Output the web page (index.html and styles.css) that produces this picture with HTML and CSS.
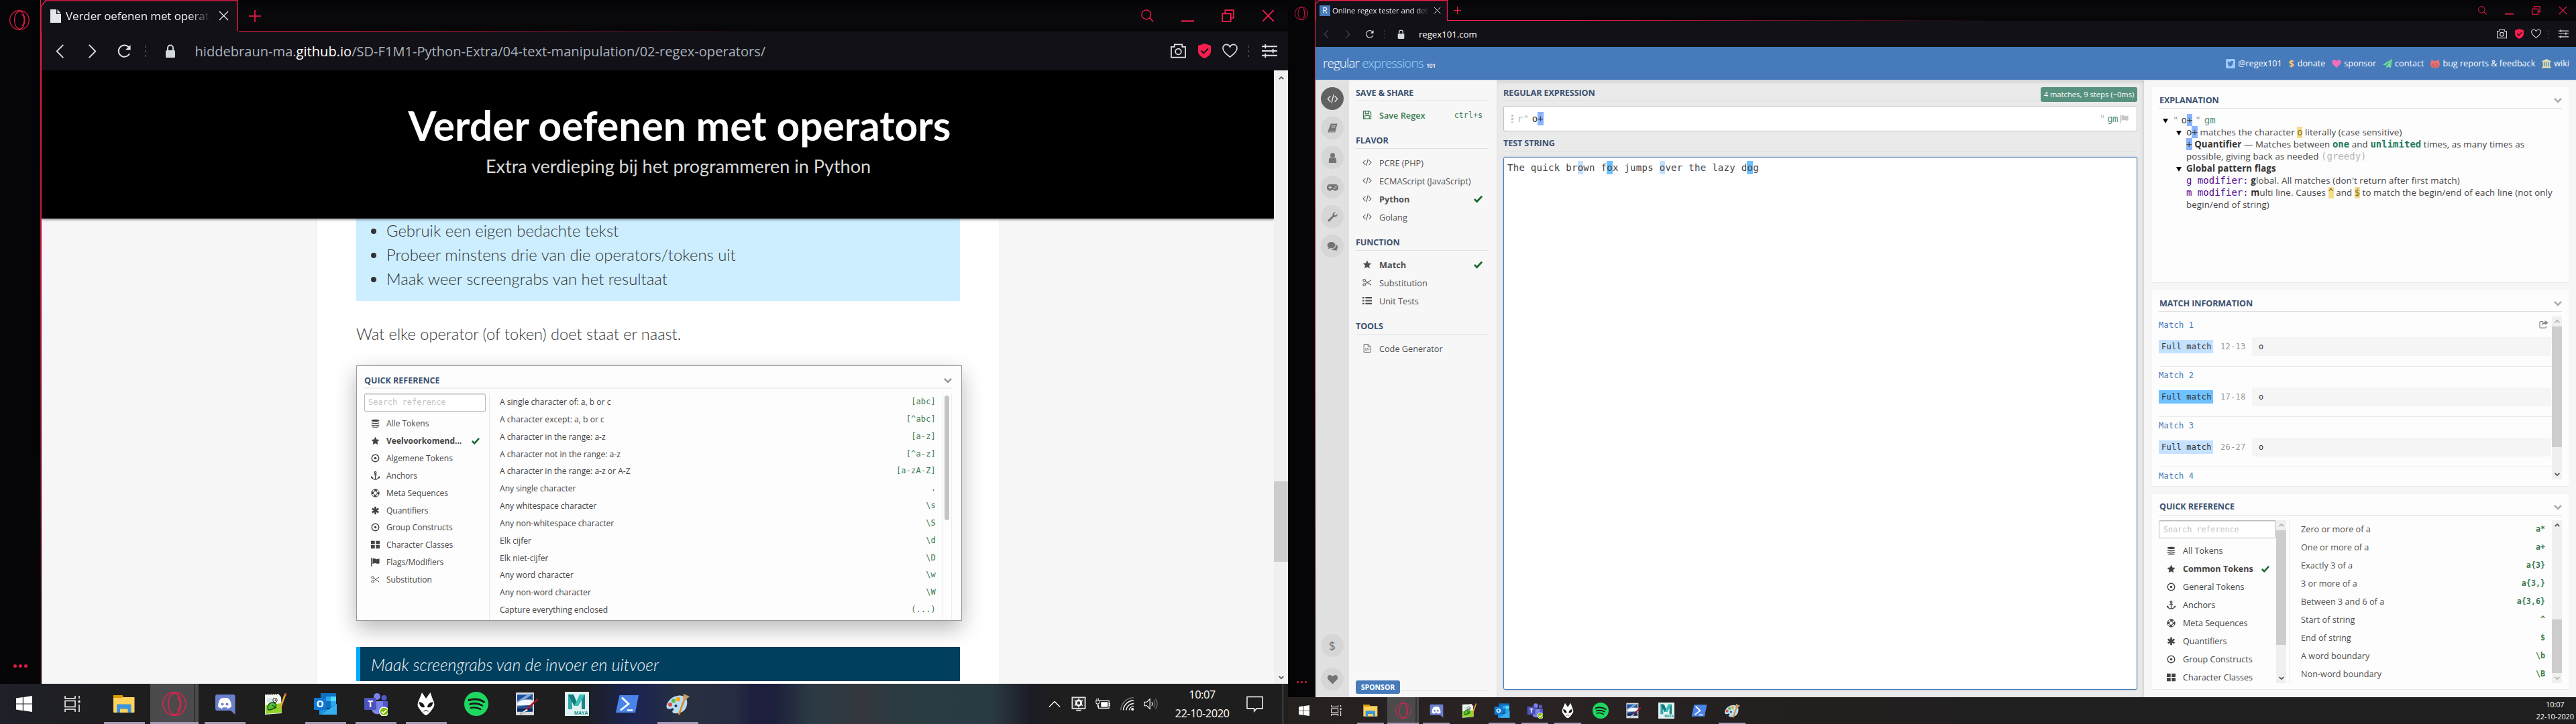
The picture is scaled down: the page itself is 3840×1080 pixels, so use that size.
FILE: index.html
```html
<!DOCTYPE html>
<html lang="nl">
<head>
<meta charset="utf-8">
<title>Desktop</title>
<link rel="stylesheet" href="styles.css">
</head>
<body>
<svg class="defs" aria-hidden="true">
  <symbol id="opera" viewBox="0 0 36 36"><g fill="none" stroke="currentColor"><circle cx="18" cy="18" r="17.2" stroke-width="1.5"/><ellipse cx="18.3" cy="18" rx="9.2" ry="16" stroke-width="1.5"/><path d="M22 7.5c6 5 6 16 0 21" stroke-width="1.5"/></g></symbol>
  <symbol id="file" viewBox="0 0 16 20"><path d="M0 0h9v7h7v13H0z" fill="#e3e7ec"/><path d="M10.5 0L16 6h-5.500z" fill="#e3e7ec"/></symbol>
  <symbol id="close" viewBox="0 0 16 16"><path d="M1 1l14 14M15 1L1 15" stroke="currentColor" stroke-width="1.4"/></symbol>
  <symbol id="plus" viewBox="0 0 16 16"><path d="M8 0v16M0 8h16" stroke="currentColor" stroke-width="1.4"/></symbol>
  <symbol id="back" viewBox="0 0 24 24"><path d="M17 2L7 12l10 10" fill="none" stroke="currentColor" stroke-width="1.900"/></symbol>
  <symbol id="fwd" viewBox="0 0 24 24"><path d="M7 2l10 10L7 22" fill="none" stroke="currentColor" stroke-width="1.900"/></symbol>
  <symbol id="reload" viewBox="0 0 24 24"><path d="M20 15.500A9 9 0 1 1 18.500 5.500" fill="none" stroke="currentColor" stroke-width="2"/><path d="M21.500 2v8h-8z" fill="currentColor"/></symbol>
  <symbol id="lock" viewBox="0 0 16 20"><path d="M4 9V5.500a4 4 0 0 1 8 0V9" fill="none" stroke="#d3d8da" stroke-width="2"/><rect x="1" y="9" width="14" height="11" rx="1.500" fill="#d3d8da"/></symbol>
  <symbol id="camera" viewBox="0 0 24 22"><path d="M1 4.500h5V1h12v3.500h5V21H1z" fill="none" stroke="#dfe1e3" stroke-width="1.800"/><circle cx="12" cy="12" r="4.500" fill="none" stroke="#dfe1e3" stroke-width="1.800"/></symbol>
  <symbol id="shield" viewBox="0 0 20 22"><path d="M10 0l9.500 3v8.500c0 5-4.500 8.500-9.500 10.500C5 20 .5 16.500.5 11.500V3z" fill="#fa1e4e"/><path d="M5 10.500l3.800 3.800L15.500 7.500" fill="none" stroke="#121117" stroke-width="2"/></symbol>
  <symbol id="hearto" viewBox="0 0 24 22"><path d="M12 20.500C6 15.500 1 11.500 1 6.500 1 3 3.600 1 6.300 1 9 1 11 2.700 12 4.800 13 2.700 15 1 17.700 1 20.400 1 23 3 23 6.500c0 5-5 9-11 14z" fill="none" stroke="#dfe1e3" stroke-width="1.700"/></symbol>
  <symbol id="sliders" viewBox="0 0 22 20"><path d="M0 3.500h22M0 10h22M0 16.500h22M5 .5v6M16 7v6M5 13.500v6" stroke="#dfe1e3" stroke-width="1.800"/></symbol>
  <symbol id="search" viewBox="0 0 22 22"><circle cx="9" cy="9" r="8" fill="none" stroke="currentColor" stroke-width="1.500"/><path d="M14.500 14.500L21 21" stroke="currentColor" stroke-width="1.700"/></symbol>
  <symbol id="min" viewBox="0 0 18 18"><path d="M0 16.500h18" stroke="currentColor" stroke-width="2"/></symbol>
  <symbol id="restore" viewBox="0 0 18 18"><path d="M1 6h12v11H1zM5 6V1h12v11h-4" fill="none" stroke="currentColor" stroke-width="1.600"/></symbol>
  <symbol id="code" viewBox="0 0 16 14"><path d="M5 3L1.200 7 5 11M11 3l3.800 4L11 11M9.400 1L6.600 13" fill="none" stroke="currentColor" stroke-width="1.200"/></symbol>
  <symbol id="book" viewBox="0 0 16 16"><path d="M5 .5h10.500L12 14.500H2C.5 14.500.3 13 .8 12z" fill="currentColor"/><path d="M6.500 4h6M6 6.300h6M2.300 12.500h9.200" stroke="#d8d8d8"/></symbol>
  <symbol id="user" viewBox="0 0 16 16"><circle cx="8" cy="4" r="3.700" fill="currentColor"/><path d="M2 16v-4.500C2 8.500 4 7.500 5 7.300c2 1.300 4 1.300 6 0 1 .2 3 1.200 3 4.200V16z" fill="currentColor"/></symbol>
  <symbol id="gamepad" viewBox="0 0 18 14"><path d="M5 2h8a5 5 0 0 1 0 10.500c-1.500 0-2.300-.9-3-1.700H8c-.7.8-1.500 1.700-3 1.700A5 5 0 0 1 5 2z" fill="currentColor"/><path d="M5 4.700v4.600M2.700 7h4.600" stroke="#d8d8d8" stroke-width="1.500"/><circle cx="12" cy="8.400" r="1.200" fill="#d8d8d8"/><circle cx="14.300" cy="6" r="1.200" fill="#d8d8d8"/></symbol>
  <symbol id="wrench" viewBox="0 0 16 16"><path d="M1 12.500L8 6c-.8-3 1.700-6 5-5.500l-2.500 2.700.4 2 2.100.4L15.600 3c.6 3.300-2.300 6-5.500 5L3.500 15C1.500 16.500-.5 14.500 1 12.500z" fill="currentColor"/></symbol>
  <symbol id="comments" viewBox="0 0 18 16"><path d="M7 1c3.600 0 6.300 2.200 6.300 5S10.600 11 7 11c-.8 0-1.500-.1-2.200-.3C3.800 11.500 2.500 12 1.300 12.100c.7-.7 1.200-1.500 1.300-2.300C1.300 8.900.7 7.500.7 6c0-2.800 2.700-5 6.300-5z" fill="currentColor"/><path d="M14.600 5c3.400 2 3.400 6 .6 8 .1.900.6 1.600 1.300 2.300-1.300-.1-2.500-.6-3.500-1.400-2.600.6-5-.2-6.300-1.700C11.600 12 15 9.500 14.600 5z" fill="currentColor"/></symbol>
  <symbol id="heart" viewBox="0 0 16 15"><path d="M8 14.500L1.600 8C-1 5 .6 1 4 1c2 0 3.300 1.200 4 2.400C8.700 2.200 10 1 12 1c3.400 0 5 4 2.400 7z" fill="currentColor"/></symbol>
  <symbol id="save" viewBox="0 0 14 14"><path d="M1 1h9.500L13 3.500V13H1z" fill="none" stroke="currentColor" stroke-width="1.300"/><path d="M4 1v4h5.500V1M3.500 13V8h7v5" fill="none" stroke="currentColor" stroke-width="1.200"/></symbol>
  <symbol id="check" viewBox="0 0 14 12"><path d="M1 6.500l4 4L13 1.800" fill="none" stroke="#17692b" stroke-width="3"/></symbol>
  <symbol id="star" viewBox="0 0 16 16"><path d="M8 .5l2.300 4.900 5.300.7-3.900 3.700 1 5.300L8 12.500l-4.700 2.600 1-5.300L.4 6.100l5.300-.7z" fill="currentColor"/></symbol>
  <symbol id="scissors" viewBox="0 0 16 14"><g fill="none" stroke="currentColor" stroke-width="1.200"><circle cx="3" cy="3.200" r="2"/><circle cx="3" cy="10.800" r="2"/><path d="M4.700 4.400L15 11.500M4.700 9.600L15 2.500"/></g></symbol>
  <symbol id="list" viewBox="0 0 16 14"><path d="M0 2h3M0 7h3M0 12h3M5 2h11M5 7h11M5 12h11" stroke="currentColor" stroke-width="2.400"/></symbol>
  <symbol id="filecode" viewBox="0 0 14 16"><path d="M1 .7h7.500L13 5v10.300H1zM8.500 1v4H13M5 8l-1.800 2L5 12M9 8l1.800 2L9 12M7.700 7.500l-1.400 5" fill="none" stroke="currentColor"/></symbol>
  <symbol id="db" viewBox="0 0 14 16"><path d="M0 2.500C0 .2 14 .2 14 2.500v1C14 5.800 0 5.800 0 3.500zM0 6c2 1.700 12 1.700 14 0v1.500c0 2.300-14 2.300-14 0zM0 10c2 1.700 12 1.700 14 0v1.300c0 2.300-14 2.300-14 0zM0 13.500c2 1.500 12 1.500 14 0v.3c0 2.500-14 2.500-14 0z" fill="currentColor"/></symbol>
  <symbol id="target" viewBox="0 0 16 16"><circle cx="8" cy="8" r="6.500" fill="none" stroke="currentColor" stroke-width="1.700"/><circle cx="8" cy="8" r="2.200" fill="currentColor"/></symbol>
  <symbol id="anchor" viewBox="0 0 16 16"><g fill="none" stroke="currentColor" stroke-width="1.600"><circle cx="8" cy="2.500" r="1.700"/><path d="M8 4v11M5 6.500h6M1.500 10.500C2.500 13.500 5 15 8 15s5.500-1.500 6.500-4.500"/></g><path d="M0 13V9l4 2.500zM16 13V9l-4 2.500z" fill="currentColor"/></symbol>
  <symbol id="ring" viewBox="0 0 16 16"><circle cx="8" cy="8" r="7" fill="none" stroke="currentColor" stroke-width="1.200"/><circle cx="8" cy="8" r="3.500" fill="none" stroke="currentColor" stroke-width="1.200"/><circle cx="8" cy="8" r="5.300" fill="none" stroke="currentColor" stroke-width="3.500" stroke-dasharray="4.600 3.720" stroke-dashoffset="2.300"/></symbol>
  <symbol id="aster" viewBox="0 0 16 16"><path d="M8 1v14M2 4.500l12 7M14 4.500l-12 7" stroke="currentColor" stroke-width="3.400"/></symbol>
  <symbol id="th" viewBox="0 0 16 14"><path d="M0 0h7v6.300H0zM9 0h7v6.300H9zM0 7.700h7V14H0zM9 7.700h7V14H9z" fill="currentColor"/></symbol>
  <symbol id="flag" viewBox="0 0 16 16"><path d="M1 0v16" stroke="currentColor" stroke-width="1.800"/><path d="M3 2c4-2 6 1.500 9 .6L15.500 1.500v8.800c-4 2.400-6-1-9-.3L3 11.200z" fill="currentColor"/></symbol>
  <symbol id="share" viewBox="0 0 16 14"><path d="M7 2H2.500Q1 2 1 3.500v8Q1 13 2.500 13h8q1.500 0 1.500-1.500V9.500" fill="none" stroke="currentColor" stroke-width="1.500"/><path d="M10 0l6 4-6 4V5.800C7 5.800 5.500 7 5 9.500 4 5.500 6 2.600 10 2.500z" fill="currentColor"/></symbol>
  <symbol id="chev" viewBox="0 0 12 9"><path d="M1 2l5 5 5-5" fill="none" stroke="currentColor" stroke-width="2.500"/></symbol>
  <symbol id="twitter" viewBox="0 0 14 14"><rect width="14" height="14" rx="2" fill="#9ccbff"/><path d="M2.500 10c1.200 0 2-.2 2.600-.8C4 9 3.500 8.400 3.300 7.700h.8C3.200 7.300 2.700 6.600 2.700 5.600l.8.200C2.700 5 2.600 4 3.100 3.200 4.200 4.500 5.500 5.200 7 5.200c-.3-1.500.6-2.500 1.800-2.500.6 0 1.100.3 1.400.6l1.300-.4-.9 1.200 1-.2-1 1C10.700 8.500 8.500 11 5.500 11c-1.200 0-2.200-.4-3-1z" fill="#467aba"/></symbol>
  <symbol id="plane" viewBox="0 0 16 16"><path d="M16 0l-2.500 15-5-2L6 16v-4L14 3 4.500 11 0 9.300z" fill="#6fdb94"/></symbol>
  <symbol id="cat" viewBox="0 0 16 16"><path d="M2 1l4 2.300h4L14 1c1 1.500 1 3 .8 4C17 9 16 14.500 11 15H5C0 14.500-1 9 1.200 5 1 4 1 2.500 2 1z" fill="#f2716f"/><path d="M2.700 9.500c1-2 9.600-2 10.600 0 .6 3-1.300 4-5.300 4s-5.900-1-5.300-4z" fill="none" stroke="#a7555f"/><path d="M5.300 9.500v2M10.700 9.500v2" stroke="#a7555f" stroke-width="1.500"/></symbol>
  <symbol id="bank" viewBox="0 0 16 16"><path d="M8 0l8 3.700V5H0V3.700zM2 5.500h2v7H2zM5.300 5.500h2v7h-2zM8.700 5.500h2v7h-2zM12 5.500h2v7h-2zM1 12.500h14V14h1v1.500H0V14h1z" fill="#dcdcae"/></symbol>
  <symbol id="win" viewBox="0 0 24 24"><path d="M0 3.400L9.800 2v9.500H0zM11 1.900L24 0v11.500H11zM0 12.500h9.800V22L0 20.600zM11 12.500h13V24l-13-1.900z" fill="#fff"/></symbol>
  <symbol id="tv" viewBox="0 0 24 24"><path d="M1 0v4h15V0M1 24v-4h15v4M1 7.500h15v9H1zM22 0v4M22 7v3M22 13v11" fill="none" stroke="#fff" stroke-width="1.500"/><path d="M20.500 7h3v3h-3z" fill="#fff"/></symbol>
  <symbol id="folder" viewBox="0 0 36 36"><path d="M2 5h13l2 3h16.500v22q0 1-1 1H3q-1 0-1-1z" fill="#ffd35c"/><path d="M2 5h13.500l1 3-2 1H2z" fill="#dd9a04"/><path d="M7 31V20q0-1.500 1.500-1.500H27q1.500 0 1.500 1.500v11h-5v-5.500H12V31z" fill="#3a96dd"/></symbol>
  <symbol id="discord" viewBox="0 0 36 36"><path d="M6 4h25q2.500 0 2.500 2.500V34l-6.500-6H7q-3 0-3-3V6.500Q4 4 6 4z" fill="#6a80cc"/><path d="M12 10q6-2 12 0 4 5 4 12-3 3-6 3l-1.500-2q-2.500.6-5 0L14 25q-3 0-6-3 0-7 4-12z" fill="#fff"/><circle cx="14.500" cy="18.500" r="2" fill="#6a80cc"/><circle cx="21.500" cy="18.500" r="2" fill="#6a80cc"/></symbol>
  <symbol id="npp" viewBox="0 0 36 36"><path d="M3 4l20-1 4 5 1 24-25 2z" fill="#f3f7ee"/><path d="M3.500 20l24-3 .7 14-24.500 2z" fill="#8fd32b"/><path d="M4 4h18" stroke="#555" stroke-width="2" stroke-dasharray="1.500 1.500"/><path d="M6 11h14M6 14h9" stroke="#9bc4de"/><path d="M7 25q0-9 8-9 6 1 4 6-4 5-11 5zM9 27l10-3M14 20l6 4" fill="#4fbf35" stroke="#1d4a12" stroke-width="1.300"/><circle cx="18" cy="12.500" r="3.200" fill="#fff" stroke="#222"/><circle cx="18.500" cy="12.500" r="1" fill="#111"/><path d="M25.500 25L33.500 3" stroke="#f0a72a" stroke-width="2.600"/><path d="M33 5l1-3" stroke="#c44" stroke-width="3"/></symbol>
  <symbol id="outlook" viewBox="0 0 36 36"><path d="M11 2h23v22H11z" fill="#0f6fc0"/><path d="M19 7h8v7h-8z" fill="#28a8ea"/><path d="M26 7h8v7h-8z" fill="#50d9ff"/><path d="M26 14h8v8h-8z" fill="#28a8ea"/><path d="M9 18l13 8 13-8v16H9z" fill="#1a8ee0"/><path d="M35 18v16H12z" fill="#35b0f0"/><rect x="1" y="9" width="18" height="18" rx="1" fill="#0f78d4"/><text x="10" y="22.700" class="glyph">O</text></symbol>
  <symbol id="teams" viewBox="0 0 36 36"><circle cx="20" cy="7" r="5" fill="#7b83eb"/><circle cx="30.500" cy="9" r="4" fill="#5059c9"/><path d="M24 14h12v10q0 6-7 6h-5z" fill="#5059c9"/><path d="M12 14h17v11q-1 8-9 8.500-7-.5-8-8.500z" fill="#7b83eb"/><rect x="1" y="9" width="18" height="18" rx="1" fill="#4b53bc"/><text x="10" y="22.700" class="glyph">T</text><circle cx="30.500" cy="29.500" r="6.500" fill="#7fba00" stroke="#fff" stroke-width="1.500"/><path d="M27 29.500l2.500 2.700 4.500-5" fill="none" stroke="#fff" stroke-width="1.900"/></symbol>
  <symbol id="foobar" viewBox="0 0 36 36"><path d="M12 1l6 9h0L24.500 1 28 11q5 9 0 14-6 9-10 10-4-1-10-10-5-5 0-14z" fill="#fff"/><path d="M7.500 15q8 1 8.500 8-7 2-8.500-8zM28.500 15q-8 1-8.500 8 7 2 8.500-8zM14 30q4-6 8 0l-4-2z" fill="#151515"/></symbol>
  <symbol id="spotify" viewBox="0 0 36 36"><circle cx="18" cy="18" r="18" fill="#1ed760"/><g fill="none" stroke="#191414" stroke-linecap="round"><path d="M7 12.500q12-4 22.500 2.500" stroke-width="3"/><path d="M8.500 18.500q10-3 18.500 2" stroke-width="2.500"/><path d="M9.500 24q8-2 15 2" stroke-width="2.200"/></g></symbol>
  <symbol id="pdn" viewBox="0 0 36 36"><path d="M2 1h27v34H2z" fill="#d9d9da"/><path d="M4 3h23v27H4z" fill="#24508e"/><path d="M4 3h23l-12 9q6-2 12 0v7L4 22z" fill="#7fa9d6"/><path d="M4 5h14L4 14z" fill="#1d4c9c"/><path d="M4 17q8-8 23-4v7H4z" fill="#f4f7fb"/><path d="M4 25h23v3H4z" fill="#0b2455"/><path d="M34.500 11L17 27" stroke="#a41722" stroke-width="2.800"/><path d="M18 25.500l-10 7 2 1 10-6z" fill="#eee" stroke="#555" stroke-width=".6"/></symbol>
  <symbol id="maya" viewBox="0 0 36 36"><path d="M0 0h36v36H0z" fill="#dff2f1"/><path d="M5 4h6v22H5z" fill="#37a5a5"/><path d="M25 4h5v22h-5z" fill="#1f8383"/><path d="M5 4h8l7 17h-6z" fill="#0d7a7c"/><path d="M30 4h-8l-8 17h6z" fill="#3bbdb8"/><text x="24" y="33.500" class="maya-word">MAYA</text></symbol>
  <symbol id="ps" viewBox="0 0 36 36"><path d="M6.500 5H35l-5 26H1z" fill="#4a84e8"/><path d="M10 8.500l10 9.500-12 9.500M18 27.500h8" fill="none" stroke="#fff" stroke-width="2.700"/></symbol>
  <symbol id="paint" viewBox="0 0 36 36"><path d="M18 6c9-2 16 4 14 13-1 9-9 14-19 13-4-1-3-4-1-5 1-2-1-3-3-2-5 2-9 0-7-6C5 11 11 7 18 6z" fill="#b7def0"/><circle cx="7" cy="19" r="3" fill="#e2493f"/><circle cx="12" cy="13.500" r="3" fill="#63b946"/><circle cx="19" cy="11" r="3.200" fill="#f5a524"/><circle cx="15.500" cy="21" r="2" fill="#1a2d60"/><path d="M30 6L20 34" stroke="#e0882c" stroke-width="2.800"/><path d="M27 3l9 4-6 5-4-2z" fill="#c99a67"/></symbol>
  <symbol id="gear" viewBox="0 0 24 24"><rect x="1.500" y="1.500" width="21" height="18" fill="#333" stroke="#ddd" stroke-width="2"/><circle cx="12" cy="10.500" r="4" fill="none" stroke="#fff" stroke-width="3"/><path d="M12 3v15M5.500 6.500l13 8M18.500 6.500l-13 8" stroke="#fff" stroke-width="1.500"/><circle cx="12" cy="10.500" r="2.500" fill="#333"/><path d="M8 22.500h8" stroke="#ddd" stroke-width="2"/></symbol>
  <symbol id="battery" viewBox="0 0 24 18"><path d="M7 4h15v12H5v-5M22.500 8.500h1.500v3h-1.500" fill="none" stroke="#fff" stroke-width="1.300"/><path d="M9 6h11v8H9z" fill="#fff"/><path d="M1 3v4q0 2 2.500 2T6 7V3zM2.200 0v3M4.800 0v3M3.500 9v5H5" fill="none" stroke="#fff" stroke-width="1.100"/></symbol>
  <symbol id="wifi" viewBox="0 0 20 20"><g fill="none" stroke="#fff" stroke-width="1.300"><path d="M1.500 18.500A18 18 0 0 1 19 1.500" stroke="#777"/><path d="M5 18.500A14 14 0 0 1 19 5.500M9 18.500A10 10 0 0 1 19 9.500M13 18.500A6 6 0 0 1 19 13.500"/></g><circle cx="17.500" cy="17.300" r="1.800" fill="#fff"/></symbol>
  <symbol id="volume" viewBox="0 0 24 20"><path d="M1 7h4l5-5v16l-5-5H1z" fill="none" stroke="#fff" stroke-width="1.300"/><path d="M13 7q2 3 0 6" fill="none" stroke="#fff" stroke-width="1.300"/><path d="M16 4.500q4 5.500 0 11M19 2q6 8 0 16" fill="none" stroke="#777" stroke-width="1.300"/></symbol>
  <symbol id="note" viewBox="0 0 26 25"><path d="M1 1h24v18H16l-4 4.500V19H1z" fill="none" stroke="#fff" stroke-width="1.500"/></symbol>
</svg>

<div class="desk">
<!-- Left monitor: course page -->
<section class="screen lo">
  <div class="browser">
    <aside class="rail"><svg class="logo"><use href="#opera"/></svg><i class="dots3"><b></b><b></b><b></b></i></aside>
    <div class="edge"></div>
    <div class="window">
      <div class="tabs">
        <div class="tab">
          <svg class="tabline" viewBox="0 0 295 47" preserveAspectRatio="none"><path d="M0 47V10L7 .8h287V46.500" fill="none" stroke="#fa1e4e" stroke-width="1.300"/></svg>
          <svg class="fav"><use href="#file"/></svg><span class="tabtitle">Verder oefenen met operators</span><svg class="tabx"><use href="#close"/></svg>
        </div>
        <svg class="newtab"><use href="#plus"/></svg>
        <div class="wbtns"><span><svg><use href="#search"/></svg></span><span><svg><use href="#min"/></svg></span><span><svg><use href="#restore"/></svg></span><span><svg><use href="#close"/></svg></span></div>
      </div>
      <div class="bar">
        <span class="nb"><svg><use href="#back"/></svg></span><span class="nb"><svg><use href="#fwd"/></svg></span><span class="nb"><svg><use href="#reload"/></svg></span><span class="vd"><i></i><i></i><i></i></span><span class="lk"><svg><use href="#lock"/></svg></span>
        <span class="url">hiddebraun-ma.<b>github.io</b>/SD-F1M1-Python-Extra/04-text-manipulation/02-regex-operators/</span>
        <span class="tb cam"><svg><use href="#camera"/></svg></span><span class="tb shd"><svg><use href="#shield"/></svg></span><span class="tb hrt"><svg><use href="#hearto"/></svg></span><span class="vd"><i></i><i></i><i></i></span><span class="tb sld"><svg><use href="#sliders"/></svg></span>
      </div>
      <div class="page">
        <div class="course">
          <header class="hero"><h1>Verder oefenen met operators</h1><p>Extra verdieping bij het programmeren in Python</p></header>
          <main class="sheet">
            <ul class="tasks"><li>Gebruik een eigen bedachte tekst</li><li>Probeer minstens drie van die operators/tokens uit</li><li>Maak weer screengrabs van het resultaat</li></ul>
            <p class="para">Wat elke operator (of token) doet staat er naast.</p>
            <figure class="shot">
              <div class="shothead"><h2>QUICK REFERENCE</h2><svg><use href="#chev"/></svg></div>
              <div class="shotbody">
                <div class="cats">
                  <div class="sfield">Search reference</div>
                  <div class="cat"><svg><use href="#db"/></svg>Alle Tokens</div>
                  <div class="cat on"><svg><use href="#star"/></svg>Veelvoorkomend...<svg class="ok"><use href="#check"/></svg></div>
                  <div class="cat"><svg><use href="#target"/></svg>Algemene Tokens</div>
                  <div class="cat"><svg><use href="#anchor"/></svg>Anchors</div>
                  <div class="cat"><svg><use href="#ring"/></svg>Meta Sequences</div>
                  <div class="cat"><svg><use href="#aster"/></svg>Quantifiers</div>
                  <div class="cat"><svg><use href="#target"/></svg>Group Constructs</div>
                  <div class="cat"><svg><use href="#th"/></svg>Character Classes</div>
                  <div class="cat"><svg><use href="#flag"/></svg>Flags/Modifiers</div>
                  <div class="cat"><svg><use href="#scissors"/></svg>Substitution</div>
                </div>
                <div class="toks">
                  <div><span>A single character of: a, b or c</span><code>[abc]</code></div>
                  <div><span>A character except: a, b or c</span><code>[^abc]</code></div>
                  <div><span>A character in the range: a-z</span><code>[a-z]</code></div>
                  <div><span>A character not in the range: a-z</span><code>[^a-z]</code></div>
                  <div><span>A character in the range: a-z or A-Z</span><code>[a-zA-Z]</code></div>
                  <div><span>Any single character</span><code>.</code></div>
                  <div><span>Any whitespace character</span><code>\s</code></div>
                  <div><span>Any non-whitespace character</span><code>\S</code></div>
                  <div><span>Elk cijfer</span><code>\d</code></div>
                  <div><span>Elk niet-cijfer</span><code>\D</code></div>
                  <div><span>Any word character</span><code>\w</code></div>
                  <div><span>Any non-word character</span><code>\W</code></div>
                  <div><span>Capture everything enclosed</span><code>(...)</code></div>
                </div>
                <div class="pill"><i></i></div>
              </div>
            </figure>
            <p class="assign">Maak screengrabs van de invoer en uitvoer</p>
          </main>
        </div>
        <div class="sb pagesb"><svg><use href="#chev"/></svg><i></i><svg><use href="#chev"/></svg></div>
      </div>
    </div>
  </div>
  <footer class="taskbar">
    <span class="sys"><svg><use href="#win"/></svg></span><span class="sys"><svg><use href="#tv"/></svg></span>
    <span class="app run"><svg><use href="#folder"/></svg></span><span class="app act"><svg><use href="#opera"/></svg></span><span class="app run"><svg><use href="#discord"/></svg></span><span class="app"><svg><use href="#npp"/></svg></span><span class="app run"><svg><use href="#outlook"/></svg></span><span class="app run"><svg><use href="#teams"/></svg></span><span class="app run"><svg><use href="#foobar"/></svg></span><span class="app"><svg><use href="#spotify"/></svg></span><span class="app"><svg><use href="#pdn"/></svg></span><span class="app"><svg><use href="#maya"/></svg></span><span class="app"><svg><use href="#ps"/></svg></span><span class="app run"><svg><use href="#paint"/></svg></span>
    <div class="tray"><svg class="up" viewBox="0 0 20 12"><path d="M1 11l9-9 9 9" fill="none" stroke="#fff" stroke-width="1.500"/></svg><svg><use href="#gear"/></svg><svg><use href="#battery"/></svg><svg><use href="#wifi"/></svg><svg><use href="#volume"/></svg><div class="clock">10:07<br>22-10-2020</div><svg class="nt"><use href="#note"/></svg></div>
  </footer>
</section>

<!-- Right monitor: regex tester -->
<section class="screen hi">
  <div class="browser">
    <aside class="rail"><svg class="logo"><use href="#opera"/></svg><i class="dots3"><b></b><b></b><b></b></i></aside>
    <div class="edge"></div>
    <div class="window">
      <div class="tabs">
        <div class="tab">
          <svg class="tabline" viewBox="0 0 197 31" preserveAspectRatio="none"><path d="M0 31V6L5 .6h191.400V30.500" fill="none" stroke="#fa1e4e" stroke-width="1.100"/></svg>
          <span class="rfav">R</span><span class="tabtitle">Online regex tester and debugger</span><svg class="tabx"><use href="#close"/></svg>
        </div>
        <svg class="newtab"><use href="#plus"/></svg>
        <div class="wbtns"><span><svg><use href="#search"/></svg></span><span><svg><use href="#min"/></svg></span><span><svg><use href="#restore"/></svg></span><span><svg><use href="#close"/></svg></span></div>
      </div>
      <div class="bar">
        <span class="nb dim"><svg><use href="#back"/></svg></span><span class="nb dim"><svg><use href="#fwd"/></svg></span><span class="nb"><svg><use href="#reload"/></svg></span><span class="vd"><i></i><i></i><i></i></span><span class="lk"><svg><use href="#lock"/></svg></span>
        <span class="url"><b>regex101.com</b></span>
        <span class="tb cam"><svg><use href="#camera"/></svg></span><span class="tb shd"><svg><use href="#shield"/></svg></span><span class="tb hrt"><svg><use href="#hearto"/></svg></span><span class="vd"><i></i><i></i><i></i></span><span class="tb sld"><svg><use href="#sliders"/></svg></span>
      </div>
      <div class="rx">
        <header class="rxhead">
          <div class="brand">regular <em>expressions</em><small>101</small></div>
          <nav><a><svg><use href="#twitter"/></svg>@regex101</a><a><b class="dollar">$</b>donate</a><a class="pink"><svg><use href="#heart"/></svg>sponsor</a><a><svg><use href="#plane"/></svg>contact</a><a><svg><use href="#cat"/></svg>bug reports &amp; feedback</a><a><svg><use href="#bank"/></svg>wiki</a></nav>
        </header>
        <div class="rxbody">
          <aside class="circles">
            <span class="cur"><svg><use href="#code"/></svg></span><span><svg><use href="#book"/></svg></span><span><svg><use href="#user"/></svg></span><span><svg><use href="#gamepad"/></svg></span><span><svg><use href="#wrench"/></svg></span><span><svg><use href="#comments"/></svg></span>
            <span class="low">$</span><span class="low2"><svg><use href="#heart"/></svg></span>
          </aside>
          <aside class="opts">
            <h3>SAVE &amp; SHARE</h3>
            <div class="opt save"><svg><use href="#save"/></svg>Save Regex<kbd>ctrl+s</kbd></div>
            <h3>FLAVOR</h3>
            <div class="opt"><svg><use href="#code"/></svg>PCRE (PHP)</div>
            <div class="opt"><svg><use href="#code"/></svg>ECMAScript (JavaScript)</div>
            <div class="opt on"><svg><use href="#code"/></svg>Python<svg class="ok"><use href="#check"/></svg></div>
            <div class="opt"><svg><use href="#code"/></svg>Golang</div>
            <h3>FUNCTION</h3>
            <div class="opt on"><svg><use href="#star"/></svg>Match<svg class="ok"><use href="#check"/></svg></div>
            <div class="opt"><svg><use href="#scissors"/></svg>Substitution</div>
            <div class="opt"><svg><use href="#list"/></svg>Unit Tests</div>
            <h3>TOOLS</h3>
            <div class="opt"><svg><use href="#filecode"/></svg>Code Generator</div>
            <div class="sponsor"><span>SPONSOR</span><i></i></div>
          </aside>
          <main class="editor">
            <div class="edhead"><h3>REGULAR EXPRESSION</h3><span class="badge">4 matches, 9 steps (~0ms)</span></div>
            <div class="pattern"><span class="grip"></span><span class="faint">r"</span><span class="pat">o<mark class="q">+</mark></span><span class="faint endq">"</span><span class="gm">gm</span><svg><use href="#flag"/></svg></div>
            <h3 class="ts">TEST STRING</h3>
            <div class="subject">The quick br<mark>o</mark>wn f<mark class="b">o</mark>x jumps <mark>o</mark>ver the lazy d<mark class="b">o</mark>g</div>
          </main>
          <aside class="info">
            <section class="card">
              <h3>EXPLANATION<svg><use href="#chev"/></svg></h3>
              <div class="expl">
                <div class="l1"><i class="tri"></i><code class="g oq">"</code><code>o<mark class="q">+</mark></code><code class="g cq">"</code><code class="green">gm</code></div>
                <div class="l2"><i class="tri"></i><code>o<mark class="q">+</mark></code> matches the character <mark class="y">o</mark> literally (case sensitive)</div>
                <div class="l3"><mark class="q">+</mark> <b>Quantifier</b> — Matches between <code class="n">one</code> and <code class="n">unlimited</code> times, as many times as</div>
                <div class="l3">possible, giving back as needed <code class="gr">(greedy)</code></div>
                <div class="l2"><i class="tri"></i><b>Global pattern flags</b></div>
                <div class="l3"><code class="p">g modifier:</code> <b>g</b>lobal. All matches (don't return after first match)</div>
                <div class="l3"><code class="p">m modifier:</code> <b>m</b>ulti line. Causes <mark class="y">^</mark> and <mark class="y">$</mark> to match the begin/end of each line (not only</div>
                <div class="l3">begin/end of string)</div>
              </div>
            </section>
            <section class="card">
              <h3>MATCH INFORMATION<svg><use href="#chev"/></svg></h3>
              <div class="minfo">
                <div class="mlist">
                  <div class="m"><div class="mt">Match 1<svg><use href="#share"/></svg></div><div class="mr"><span class="fm">Full match</span><span class="rg">12-13</span><span class="val">o</span></div></div>
                  <div class="m"><div class="mt">Match 2</div><div class="mr"><span class="fm b">Full match</span><span class="rg">17-18</span><span class="val">o</span></div></div>
                  <div class="m"><div class="mt">Match 3</div><div class="mr"><span class="fm">Full match</span><span class="rg">26-27</span><span class="val">o</span></div></div>
                  <div class="mt">Match 4</div>
                </div>
                <div class="sb s1"><svg class="off"><use href="#chev"/></svg><i></i><svg><use href="#chev"/></svg></div>
              </div>
            </section>
            <section class="card">
              <h3>QUICK REFERENCE<svg><use href="#chev"/></svg></h3>
              <div class="qref">
                <div class="qcats">
                  <div class="sfield">Search reference</div>
                  <div class="cat"><svg><use href="#db"/></svg>All Tokens</div>
                  <div class="cat on"><svg><use href="#star"/></svg>Common Tokens<svg class="ok"><use href="#check"/></svg></div>
                  <div class="cat"><svg><use href="#target"/></svg>General Tokens</div>
                  <div class="cat"><svg><use href="#anchor"/></svg>Anchors</div>
                  <div class="cat"><svg><use href="#ring"/></svg>Meta Sequences</div>
                  <div class="cat"><svg><use href="#aster"/></svg>Quantifiers</div>
                  <div class="cat"><svg><use href="#target"/></svg>Group Constructs</div>
                  <div class="cat"><svg><use href="#th"/></svg>Character Classes</div>
                </div>
                <div class="sb s2"><svg class="off"><use href="#chev"/></svg><i></i><svg><use href="#chev"/></svg></div>
                <div class="qtoks">
                  <div><span>Zero or more of a</span><code>a*</code></div>
                  <div><span>One or more of a</span><code>a+</code></div>
                  <div><span>Exactly 3 of a</span><code>a{3}</code></div>
                  <div><span>3 or more of a</span><code>a{3,}</code></div>
                  <div><span>Between 3 and 6 of a</span><code>a{3,6}</code></div>
                  <div><span>Start of string</span><code>^</code></div>
                  <div><span>End of string</span><code>$</code></div>
                  <div><span>A word boundary</span><code>\b</code></div>
                  <div><span>Non-word boundary</span><code>\B</code></div>
                </div>
                <div class="sb s3"><svg><use href="#chev"/></svg><i></i><svg class="off"><use href="#chev"/></svg></div>
              </div>
            </section>
          </aside>
        </div>
      </div>
    </div>
  </div>
  <footer class="taskbar">
    <span class="sys"><svg><use href="#win"/></svg></span><span class="sys"><svg><use href="#tv"/></svg></span>
    <span class="app run"><svg><use href="#folder"/></svg></span><span class="app act"><svg><use href="#opera"/></svg></span><span class="app run"><svg><use href="#discord"/></svg></span><span class="app"><svg><use href="#npp"/></svg></span><span class="app run"><svg><use href="#outlook"/></svg></span><span class="app run"><svg><use href="#teams"/></svg></span><span class="app run"><svg><use href="#foobar"/></svg></span><span class="app"><svg><use href="#spotify"/></svg></span><span class="app"><svg><use href="#pdn"/></svg></span><span class="app"><svg><use href="#maya"/></svg></span><span class="app"><svg><use href="#ps"/></svg></span><span class="app run"><svg><use href="#paint"/></svg></span>
    <div class="tray"><div class="clock">10:07<br>22-10-2020</div></div>
  </footer>
</section>
</div>
</body>
</html>
```
FILE: styles.css
```css
* { box-sizing: border-box; }
body { margin: 0; background: #050507; font-family: "Open Sans", "Noto Sans", sans-serif; }
h1, h2, h3, p, ul, figure { margin: 0; padding: 0; }
svg { display: block; flex: none; }
.defs { position: absolute; width: 0; height: 0; }
.glyph { font: bold 14px "Open Sans", sans-serif; fill: #fff; text-anchor: middle; }
.maya-word { font: bold 7px "Open Sans", sans-serif; fill: #0d8c8c; text-anchor: middle; }

.desk { display: flex; width: 3840px; height: 1080px; overflow: hidden; white-space: nowrap; }
.screen { width: 1920px; height: 1080px; display: flex; flex-direction: column; flex: none; }
.browser { flex: 1; display: flex; min-height: 0; }
.rail { background: #050507; display: flex; flex-direction: column; align-items: center; color: #e01c47; flex: none; }
.edge { background: linear-gradient(#f01d4b, #b01838 50%, #20060d 90%); flex: none; }
.window { flex: 1; display: flex; flex-direction: column; min-width: 0; }
.dots3 { margin-top: auto; display: flex; }
.dots3 b { border-radius: 50%; background: #e01c47; }

/* browser chrome */
.tabs { display: flex; align-items: center; position: relative; background: linear-gradient(#050507, #0a0a0c 60%, #060608); }
.tabs::after { content: ""; position: absolute; bottom: 0; height: 1px; background: linear-gradient(90deg, #fa1e4e, #fa1e4e 20%, transparent); }
.tab { position: relative; display: flex; align-items: center; background: #121117; align-self: stretch; color: #f2f2f4; }
.tabline { position: absolute; left: 0; top: 0; width: 100%; height: 100%; }
.tabtitle { overflow: hidden; -webkit-mask-image: linear-gradient(90deg, #000 85%, transparent); }
.tabx { color: #e6e6e8; }
.newtab { color: #fa1e4e; }
.wbtns { margin-left: auto; display: flex; color: #fa1e4e; }
.wbtns span { display: flex; justify-content: center; align-items: center; }
.bar { display: flex; align-items: center; background: #121117; flex: none; }
.nb, .lk, .tb { display: flex; justify-content: center; flex: none; color: #dfe1e3; }
.nb.dim { color: #4b4b50; }
.vd { display: flex; flex-direction: column; align-items: center; gap: 4px; flex: none; }
.vd i { width: 2px; height: 3px; background: #44444a; }
.url { flex: 1; color: #a9b3be; }
.url b { color: #fff; font-weight: 400; }

.lo .rail { width: 60px; padding: 15px 0 24px 0; }
.lo .edge { width: 2px; }
.lo .logo { width: 30px; height: 30px; margin-right: 3px; }
.lo .dots3 { gap: 3px; }
.lo .dots3 b { width: 5px; height: 5px; }
.lo .tabs { height: 47px; }
.lo .tabs::after { left: 294px; width: 780px; height: 1.500px; }
.lo .tab { width: 294px; margin-left: -1px; font-size: 17px; }
.lo .fav { width: 16px; height: 20px; margin-left: 14px; }
.lo .tabtitle { width: 216px; margin-left: 7px; letter-spacing: -.1px; }
.lo .tabx { width: 15px; height: 15px; margin-left: 12px; }
.lo .newtab { width: 18px; height: 18px; margin-left: 16px; }
.lo .wbtns span { width: 60px; }
.lo .wbtns svg { width: 19px; height: 19px; }
.lo .bar { height: 58px; padding: 0 4px 0 3.500px; }
.lo .nb { width: 48px; }
.lo .nb svg { width: 23px; height: 23px; }
.lo .vd { width: 14px; }
.lo .lk { width: 60px; }
.lo .lk svg { width: 16px; height: 20px; }
.lo .url { margin-left: 7px; font-size: 20.100px; }
.lo .cam { width: 42px; } .lo .shd { width: 36px; } .lo .hrt { width: 41px; } .lo .sld { width: 48px; }
.lo .tb svg { width: 23px; height: 22px; }

.hi .rail { width: 40px; padding: 10px 0 21px; }
.hi .edge { width: 1px; }
.hi .logo { width: 20px; height: 20px; }
.hi .dots3 { gap: 3px; }
.hi .dots3 b { width: 3px; height: 3px; }
.hi .tabs { height: 31px; }
.hi .tabs::after { left: 196px; width: 820px; }
.hi .tab { width: 197px; font-size: 11.400px; }
.rfav { width: 16px; height: 16px; margin-left: 6px; background: #467aba; color: #fff; font-size: 12px; line-height: 16px; text-align: center; }
.hi .tabtitle { width: 144px; margin-left: 3px; letter-spacing: -.1px; }
.hi .tabx { width: 11px; height: 11px; margin-left: 7px; }
.hi .newtab { width: 11px; height: 11px; margin-left: 9px; }
.hi .wbtns span { width: 40px; }
.hi .wbtns svg { width: 13px; height: 13px; }
.hi .bar { height: 39px; padding-right: 3px; }
.hi .nb { width: 32.300px; }
.hi .nb svg { width: 14px; height: 14px; }
.hi .vd { width: 12px; gap: 3px; }
.hi .vd i { width: 1px; height: 2px; }
.hi .lk { width: 38px; }
.hi .lk svg { width: 11px; height: 14px; }
.hi .url { margin-left: 7px; font-size: 13.200px; }
.hi .cam { width: 26px; } .hi .shd { width: 26px; } .hi .hrt { width: 25px; } .hi .sld { width: 32px; }
.hi .tb svg { width: 15px; height: 15px; }

/* scrollbars */
.sb { display: flex; flex-direction: column; align-items: center; justify-content: space-between; background: #f0f0f0; color: #505050; flex: none; position: relative; }
.sb > svg { width: 8px; height: 7px; }
.sb > svg:first-child { transform: scaleY(-1); }
.sb .off { color: #b0b0b0; }
.sb i { position: absolute; left: 0; right: 0; background: #cdcdcd; }

/* course page */
.page { flex: 1; display: flex; min-height: 0; }
.course { flex: 1; background: #f6f6f6; display: flex; flex-direction: column; font-family: Lato, sans-serif; overflow: hidden; }
.pagesb { width: 21px; padding: 8px 0 6px; }
.pagesb i { top: 613px; height: 120px; }
.hero { height: 221px; flex: none; background: #000; color: #fff; text-align: center; padding: 46px 0 0 65px; position: relative; box-shadow: 0 1px 4px rgba(0,0,0,.6); z-index: 1; }
.hero h1 { font-size: 60.500px; line-height: 72px; font-weight: 700; }
.hero p { font-size: 27px; line-height: 32px; margin: 9px 4px 0 0; color: #d8d8d8; }
.sheet { width: 1020px; margin-left: 409px; flex: 1; background: #fff; padding: 0 60px; border: solid #ececec; border-width: 0 1px; min-height: 0; }
.tasks { background: #cef; height: 123px; width: 900px; margin-left: -1px; padding: 0 0 0 45px; color: #333; font-weight: 300; font-size: 23.900px; line-height: 36.200px; }
.para { color: #333; font-weight: 300; font-size: 23.600px; line-height: 36px; margin: 31px 0 0 -1px; }
.shot { width: 903px; height: 381px; margin: 29px 0 0 -1px; border: 1px solid #999; background: #fdfdfd; padding: 0 14px 0 11px; box-shadow: 0 12px 30px rgba(0,0,0,.28); font-family: "Open Sans", sans-serif; color: #444; overflow: hidden; }
.shothead { height: 34px; display: flex; align-items: center; justify-content: space-between; border-bottom: 2px solid #eee; padding-top: 10px; color: #999; }
.shothead svg { width: 12px; height: 9px; }
.shothead h2 { font-size: 12.500px; font-weight: 700; color: #3b5170; }
.shotbody { display: flex; height: 346px; padding-top: 7px; }
.cats { width: 187px; border-right: 1px solid #e6e6e6; padding-right: 5px; font-size: 12px; flex: none; }
.sfield { border: 1px solid #bbb; border-radius: 2px; background: #fff; color: #c4c4c4; font-family: "DejaVu Sans Mono", monospace; box-shadow: inset 0 1px 1px rgba(0,0,0,.15); }
.cats .sfield { height: 27px; width: 181px; font-size: 12px; line-height: 25px; padding-left: 5px; margin-bottom: 5px; }
.cat { display: flex; align-items: center; color: #444; }
.cats .cat { height: 25.850px; padding-left: 10px; }
.cat svg { width: 13px; height: 13px; margin-right: 10px; }
.cat .ok { margin: 0 9px 0 auto; width: 12px; }
.on { font-weight: 700; }
.toks { flex: 1; padding: 0 9px 0 15px; font-size: 12.100px; }
.toks div { display: flex; justify-content: space-between; height: 25.850px; line-height: 25.850px; }
.toks code, .qtoks code { font-family: "DejaVu Sans Mono", monospace; color: #3a7a52; }
.toks code { font-size: 12px; letter-spacing: .150px; }
.pill { width: 15px; border: solid #eee; border-width: 0 1px; padding: 3px 3px; }
.pill i { display: block; height: 186px; border-radius: 4px; background: #c4c4c4; }
.assign { margin: 39px 0 0 -1px; width: 900px; height: 51px; background: #003f5e; border-left: 6px solid #0af; color: #f0f4f6; font-weight: 300; font-style: italic; font-size: 24.900px; line-height: 53px; padding-left: 16px; }

/* regex tester */
.rx { flex: 1; display: flex; flex-direction: column; min-height: 0; }
.rxhead { height: 50px; background: #467aba; border-bottom: 1px solid #cfdff2; color: #fff; display: flex; align-items: center; justify-content: space-between; padding: 0 10px 0 11px; flex: none; }
.brand { font-size: 18.700px; letter-spacing: -.8px; font-weight: 300; margin-top: -2px; }
.brand em { font-style: normal; color: #9cd3ff; }
.brand small { font-size: 9px; font-weight: 600; margin-left: 4px; letter-spacing: -.5px; }
.rxhead nav { display: flex; gap: 10px; font-size: 12.600px; font-weight: 400; }
.rxhead a { display: flex; align-items: center; }
.rxhead a svg { width: 14px; height: 14px; margin-right: 4px; }
.dollar { color: #ffc573; font-size: 14px; margin-right: 5px; line-height: 16px; }
.pink svg { color: #f46dbc; }
.rxbody { flex: 1; display: flex; min-height: 0; }
.circles { width: 50px; background: #e1e1e1; display: flex; flex-direction: column; align-items: center; padding: 10px 0; gap: 10px; color: #747474; flex: none; }
.circles span { width: 34px; height: 34px; border-radius: 50%; background: #d6d6d6; display: flex; align-items: center; justify-content: center; font-size: 18px; }
.circles svg { width: 17px; height: 15px; }
.circles .cur { background: #616161; color: #f0f0f0; }
.circles .low { margin-top: auto; }
.circles .low2 { margin-top: 6px; }
.opts { width: 220px; background: #f7f7f7; padding: 7px 12px 0 10px; display: flex; flex-direction: column; flex: none; }
.rx h3 { font-size: 12.600px; font-weight: 700; color: #3b5170; height: 24px; line-height: 24px; border-bottom: 1px solid #dfdfdf; letter-spacing: -.1px; }
.opts h3 { flex: none; margin-bottom: 7px; }
.opt + h3 { margin-top: 13px; }
.opt { height: 27px; display: flex; align-items: center; padding: 0 9px 0 10px; font-size: 12.700px; color: #505050; flex: none; }
.opt svg { width: 14px; height: 13px; margin-right: 11px; }
.opt .ok { margin: 0 0 0 auto; width: 13px; }
.save { color: #3a7a52; font-weight: 600; }
.save kbd { margin-left: auto; font: 11.700px "DejaVu Sans Mono", monospace; }
.sponsor { margin: auto 0 5px; display: flex; align-items: center; }
.sponsor span { background: #467aba; color: #fff; font-size: 10.500px; font-weight: 700; width: 66px; height: 20px; line-height: 20px; text-align: center; border-radius: 3px; }
.sponsor i { flex: 1; height: 1px; background: #dfdfdf; margin-top: 8px; }
.editor { flex: 1; background: #eaeaea; padding: 7px 10px 11px; display: flex; flex-direction: column; box-shadow: inset 0 4px 6px -3px rgba(0,0,0,.15), inset -4px 0 6px -3px rgba(0,0,0,.1); }
.edhead { position: relative; }
.badge { position: absolute; right: 0; top: 3px; width: 144px; height: 22px; line-height: 22px; background: #57917f; color: #fff; font-size: 11.200px; border-radius: 3px; text-align: center; }
.pattern { margin-top: 7px; height: 38px; flex: none; background: #fff; border: 1px solid #c2c2c2; border-radius: 3px; display: flex; align-items: center; padding: 0 11px; font: 14px/20px "DejaVu Sans Mono", monospace; color: #333; }
.grip { width: 3px; height: 12px; background: repeating-linear-gradient(#c4c4c4 0 3px, transparent 3px 5px); margin-right: 6px; }
.faint { color: #bbb; }
.pat { margin-left: 5px; }
mark { color: inherit; background: #c4e1ff; padding: 2px 0; }
mark.q { background: #8ab4ff; }
mark.b { background: #6ec2ff; }
mark.y { background: #f5dc8c; color: #7d6a1a; font-family: "DejaVu Sans Mono", monospace; padding: 1px 0; }
.endq { margin-left: auto; margin-right: 3px; }
.gm { color: #5a8f77; letter-spacing: -.5px; margin-right: 2px; }
.pattern svg { width: 15px; height: 13px; color: #c6c6c6; }
.rx .ts { margin-top: 6px; }
.subject { margin-top: 8px; flex: 1; background: #fff; border: 1px solid #467aba; border-radius: 3px; padding: 4px 5px; font: 14px/22px "DejaVu Sans Mono", monospace; letter-spacing: .290px; color: #444; box-shadow: 0 0 3px rgba(70,122,186,.4); }
.info { width: 644px; flex: none; background: #f6f6f6; padding: 10px 11px 11px 12px; display: flex; flex-direction: column; gap: 11px; }
.card { height: 292.300px; background: #fdfdfd; border-bottom: 1px solid #e9e9e9; padding: 0 10px; overflow: hidden; }
.card h3 { height: 32px; padding-top: 8px; display: flex; align-items: center; justify-content: space-between; padding-left: 1px; }
.card h3 svg { width: 12px; height: 9px; color: #aaa; }
.expl { padding: 8px 0 0 6px; font-size: 13.300px; letter-spacing: .120px; line-height: 18px; color: #444; }
.expl div { height: 18px; }
.expl code { font: 14px/18px "DejaVu Sans Mono", monospace; letter-spacing: 0; }
.expl mark.q { font: 14px/18px "DejaVu Sans Mono", monospace; padding: 1px 0; }
.expl b { color: #333; }
.tri { display: inline-block; border: solid transparent; border-width: 7px 4px 0; border-top-color: #000; margin-right: 7px; }
.l2 { padding-left: 20px; }
.l3 { padding-left: 35px; }
.expl .g { color: #999; }
.oq { margin-right: 4px; }
.cq { margin: 0 5px 0 4px; }
.expl .green { color: #5a8f77; }
.expl .n { color: #1d7a5a; font-weight: 700; }
.expl .gr { color: #b5b5b5; }
.expl .p { color: #560b8e; }
.minfo { display: flex; padding-top: 7px; }
.mlist { flex: 1; height: 244px; overflow: hidden; font: 12px "DejaVu Sans Mono", monospace; letter-spacing: .25px; }
.m { height: 75px; border-bottom: 1px solid #e9e9e9; }
.mt { height: 27px; line-height: 27px; color: #467aba; display: flex; justify-content: space-between; align-items: center; }
.mt svg { width: 14px; height: 12px; color: #888; margin: -3px 5px 0 0; }
.mr { display: flex; align-items: center; height: 28px; margin-top: 4px; }
.fm { width: 81px; height: 20px; line-height: 20px; background: #c4e1ff; color: #333; padding-left: 4px; flex: none; }
.fm.b { background: #6ec2ff; }
.rg { width: 58px; padding-left: 11px; color: #999; flex: none; }
.val { flex: 1; height: 28px; line-height: 29px; background: #f5f5f5; border-radius: 2px; padding-left: 10px; color: #333; margin-right: 1px; }
.s1, .s2, .s3 { width: 15px; height: 243px; padding: 4px 0; }
.s1 i { top: 15px; height: 180px; }
.s2 i { top: 15px; height: 171px; }
.s3 i { top: 148px; height: 80px; }
.qref { display: flex; padding-top: 7px; height: 250px; overflow: hidden; }
.qcats { width: 175px; flex: none; font-size: 12.600px; }
.qcats .sfield { height: 27px; line-height: 26px; font-size: 11.700px; padding-left: 6px; margin-bottom: 5px; }
.qcats .cat { height: 27px; padding-left: 12px; }
.qcats .cat svg { margin-right: 11px; }
.qcats .cat .ok { margin: 0 10px 0 auto; width: 12px; }
.qtoks { flex: 1; margin-left: 5px; border-left: 1px solid #e6e6e6; padding: 0 10px 0 16px; font-size: 12.700px; color: #505050; }
.qtoks div { height: 27px; line-height: 27px; display: flex; justify-content: space-between; }
.qtoks code { font-size: 11.700px; font-weight: 700; }

/* taskbars */
.taskbar { display: flex; align-items: center; flex: none; }
.sys, .app { display: flex; align-items: center; justify-content: center; align-self: stretch; position: relative; flex: none; }
.app.act { background: linear-gradient(90deg, #4b4b4d 90%, #333 90%, #333 93%, #4b4b4d 93%); color: #e4204c; }
.app.run::after, .app.act::after { content: ""; position: absolute; bottom: 0; background: #a599b3; }
.tray { margin-left: auto; display: flex; align-items: center; color: #fff; }
.clock { text-align: center; }
.lo .taskbar { height: 60px; background: linear-gradient(90deg, #1f2028, #1e1e1e 12%, #1e1e1e 45%, #1b2350 49%, #1e2650 50%, #28303f 53%, #262c42 57%, #1d1f3c 58.500%, #1d1f3c 60%, #2a3a44 63%, #34383e 67%, #2b3b42 70%, #2a3a42 77%, #1c1c26 80%, #1e1e1e 82%); }
.lo .sys { width: 72px; } .lo .sys svg { width: 24px; height: 24px; }
.lo .sys + .app { margin-left: 5px; }
.lo .app { width: 72px; margin-right: 3px; } .lo .app svg { width: 36px; height: 36px; }
.lo .run::after { left: 6px; width: 61px; height: 3px; }
.lo .act::after { left: 0; width: 72px; height: 3px; }
.lo .tray { gap: 14px; height: 60px; margin-right: 7px; padding-right: 29px; border-right: 1px solid #777; }
.lo .tray svg { width: 22px; height: 22px; }
.lo .tray .up { width: 18px; height: 12px; margin-right: 2px; }
.lo .clock { width: 96px; margin-left: 3px; font-size: 16.500px; line-height: 28px; letter-spacing: -.5px; }
.lo .tray .nt { width: 25px; height: 25px; margin-left: 4px; }
.hi .taskbar { height: 40px; background: linear-gradient(90deg, #25211f, #2a2324 20%, #231f1f 40%, #1f1f1f 60%); }
.hi .sys { width: 48px; } .hi .sys svg { width: 16px; height: 16px; }
.hi .sys + .app { margin-left: 3px; }
.hi .app { width: 47px; margin-right: 2px; } .hi .app svg { width: 24px; height: 24px; }
.hi .run::after { left: 4px; width: 40px; height: 2px; }
.hi .act::after { left: 0; width: 47px; height: 2px; }
.hi .clock { font-size: 11px; line-height: 18.500px; letter-spacing: -.1px; margin-right: 3px; }
```
